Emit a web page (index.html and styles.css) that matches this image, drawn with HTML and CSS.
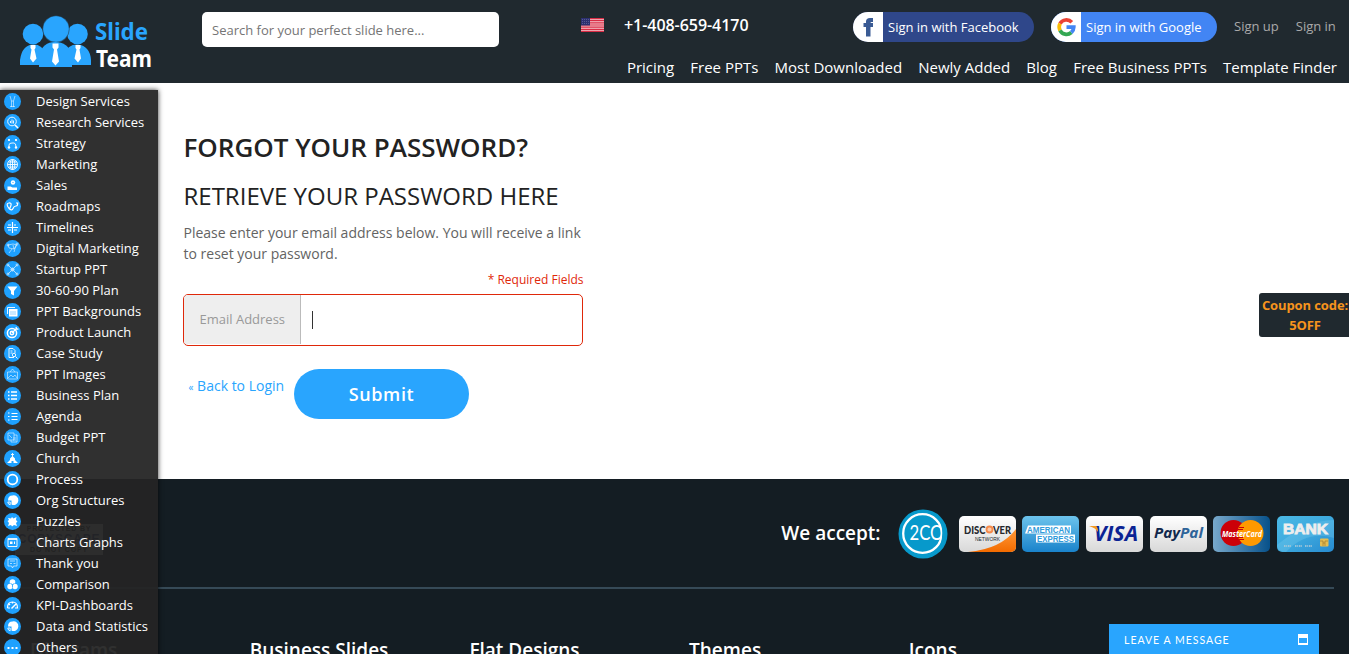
FILE: index.html
```html
<!DOCTYPE html>
<html lang="en">
<head>
<meta charset="utf-8">
<title>Forgot Your Password</title>
<link rel="stylesheet" href="styles.css">
</head>
<body>
<header class="header">
  <a class="logo" aria-label="Slide Team">
    <svg width="136" height="58" viewBox="0 0 136 58">
      <g fill="#29a5fe">
        <circle cx="15" cy="20" r="10.3"/><circle cx="59.5" cy="20" r="10.3"/>
        <path d="M2 51V46Q4 31 15 30.500Q24 30 28 40V51zM46 51V40Q50 30 60 30.500Q72 32 73 46V51z"/>
      </g>
      <circle cx="38" cy="15" r="13.300" fill="#29a5fe" stroke="#20292f" stroke-width=".5"/>
      <path d="M21 53V41Q25 28 37 28Q50 28 54 41V53z" fill="#29a5fe"/>
      <g fill="#fff"><path d="M12.500 31h5v3l-1 1.500 2 9-3.500 4-3-4 1.500-9-1-1.500zM57.500 31h5v3l-1 1.500 1.500 9-3 4-3.500-4 2-9-1-1.500zM34.500 29.500h6v4l-1.500 2 2 12-3.500 4-3.500-4 2-12-1.500-2z"/></g>
      <text class="logo-text" x="77" y="26" fill="#29a5fe" textLength="53" lengthAdjust="spacingAndGlyphs">Slide</text>
      <text class="logo-text" x="78" y="52.500" fill="#fff" textLength="56" lengthAdjust="spacingAndGlyphs">Team</text>
    </svg>
  </a>
  <input class="search" type="text" placeholder="Search for your perfect slide here...">
  <div class="header-right">
    <div class="account">
      <svg class="flag" width="23" height="14" viewBox="0 0 23 14">
        <path fill="#f5c8cf" d="M0 0h23v14H0z"/>
        <path stroke="#d92c45" stroke-width="1.200" d="M0 .6h23M0 2.700h23M0 4.900h23M0 7h23M0 9.100h23M0 11.300h23M0 13.400h23"/>
        <path fill="#2c2f70" d="M0 0h9v7.500H0z"/>
        <path stroke="#7477a5" stroke-width=".6" stroke-dasharray="1 1" d="M1 1.500h8M1 3.500h8M1 5.500h8"/>
      </svg>
      <span class="phone">+1-408-659-4170</span>
      <a class="social facebook"><span class="social-icon"><svg width="30" height="30" viewBox="0 0 30 30"><path fill="#3a5b94" d="M13 24.500v-9.500h-2.500v-4H13V9.500Q13 6 17 6h3v4H18.500q-1 0-1 1H20v4h-2.500v9.500z"/></svg></span><span class="social-label">Sign in with Facebook</span></a>
      <a class="social google"><span class="social-icon"><svg width="30" height="30" viewBox="-0.500 0 30 30"><g fill="none" stroke-width="3.700"><path stroke="#ea4335" d="M20.300 10.300A7.300 7.300 0 0 0 8.500 11.700"/><path stroke="#fbbc05" d="M8.500 11.700A7.300 7.300 0 0 0 8.500 18.300"/><path stroke="#34a853" d="M8.500 18.300A7.300 7.300 0 0 0 19.800 20.500"/><path stroke="#4285f4" d="M19.800 20.500A7.300 7.300 0 0 0 22.300 15.200H15"/></g></svg></span><span class="social-label">Sign in with Google</span></a>
      <a class="sign sign-up">Sign up</a><a class="sign sign-in">Sign in</a>
    </div>
    <nav class="nav"><a>Pricing</a><a>Free PPTs</a><a>Most Downloaded</a><a>Newly Added</a><a>Blog</a><a>Free Business PPTs</a><a>Template Finder</a></nav>
  </div>
</header>

<main class="main">
  <h1 class="title">FORGOT YOUR PASSWORD?</h1>
  <h2 class="subtitle">RETRIEVE YOUR PASSWORD HERE</h2>
  <p class="hint">Please enter your email address below. You will receive a link<br>to reset your password.</p>
  <p class="required">* Required Fields</p>
  <div class="field"><label class="field-label">Email Address</label><span class="caret"></span></div>
  <div class="actions"><a class="back"><small>«</small> Back to Login</a><button class="submit">Submit</button></div>
</main>

<footer class="footer">
  <div class="badge"><span>PROTECTED BY</span><b>COPYSCAPE</b><span>DO NOT COPY</span></div>
  <div class="payments">
    <span class="accept">We accept:</span>
    <svg class="twoco" width="50" height="50" viewBox="0 0 50 50">
      <circle cx="25" cy="25" r="24.500" fill="#0799cb"/>
      <circle cx="24.500" cy="24.500" r="19.300" fill="none" stroke="#fff" stroke-width="2.300"/>
      <text class="twoco-text" x="11.500" y="31" textLength="34" lengthAdjust="spacingAndGlyphs">2CO</text>
      <path d="M43 15q2.500 9 0 19h4V15z" fill="#0799cb"/>
    </svg>
    <svg class="card" viewBox="0 0 57 36">
      <defs>
        <linearGradient id="silver" x2="0" y2="1"><stop stop-color="#fff"/><stop offset="1" stop-color="#d8d8d8"/></linearGradient>
        <linearGradient id="amex" x2="0" y2="1"><stop stop-color="#6cc3ec"/><stop offset="1" stop-color="#1a83cb"/></linearGradient>
        <linearGradient id="master"><stop stop-color="#78a9cc"/><stop offset="1" stop-color="#07518a"/></linearGradient>
        <linearGradient id="bank" x2="1" y2="1"><stop stop-color="#4bb9e5"/><stop offset=".5" stop-color="#3da9de"/><stop offset="1" stop-color="#278bd0"/></linearGradient>
        <linearGradient id="orange" x2="0" y2="1"><stop stop-color="#ff9a3a"/><stop offset="1" stop-color="#f36b00"/></linearGradient>
        <clipPath id="round"><rect width="57" height="36" rx="5"/></clipPath>
      </defs>
      <g clip-path="url(#round)"><path fill="url(#silver)" d="M0 0h57v36H0z"/><path fill="url(#orange)" d="M57 13Q42 33 9 36h48z"/></g>
      <g fill="#24272d"><text class="lato-bold" x="5" y="17.500" font-size="11" textLength="21.500" lengthAdjust="spacingAndGlyphs">DISC</text><text class="lato-bold" x="34" y="17.500" font-size="11" textLength="18" lengthAdjust="spacingAndGlyphs">VER</text><text class="sans" x="16" y="24.500" font-size="6" textLength="25" lengthAdjust="spacingAndGlyphs">NETWORK</text></g>
      <circle cx="30.500" cy="13.500" r="3" fill="#fbc9a9" stroke="#f58a4b" stroke-width="1.800"/>
    </svg>
    <svg class="card" viewBox="0 0 57 36"><rect width="57" height="36" rx="5" fill="url(#amex)"/><path fill="#fff" d="M6 9.500h43v8H3zM14 18.500h39v8H14z"/><g fill="#319bdb"><text class="sans-bold" x="5" y="16.500" font-size="8.500" textLength="43" lengthAdjust="spacingAndGlyphs">AMERICAN</text><text class="sans-bold" x="15" y="25.500" font-size="8.500" textLength="37" lengthAdjust="spacingAndGlyphs">EXPRESS</text></g></svg>
    <svg class="card" viewBox="0 0 57 36"><rect width="57" height="36" rx="5" fill="url(#silver)"/><text class="open-bold italic" x="8" y="25" font-size="20.500" textLength="44" lengthAdjust="spacingAndGlyphs" fill="#0b2394">VISA</text><path d="M3 10h7q2 1 2 6-2-4-9-6z" fill="#f39a22"/></svg>
    <svg class="card" viewBox="0 0 57 36"><rect width="57" height="36" rx="5" fill="url(#silver)"/><g font-size="15"><text class="open-bold italic" x="4" y="22" textLength="26" lengthAdjust="spacingAndGlyphs" fill="#11284c">Pay</text><text class="open-bold italic" x="30" y="22" textLength="23" lengthAdjust="spacingAndGlyphs" fill="#2e6499">Pal</text></g></svg>
    <svg class="card" viewBox="0 0 57 36"><rect width="57" height="36" rx="5" fill="url(#master)"/><circle cx="20.500" cy="17" r="13" fill="#cc0008"/><circle cx="37.500" cy="17" r="13" fill="#ff9900"/><path stroke="#cc0008" d="M26 11.500h5M25 13.500h5M25 21.500h5M26 23.500h5"/><text class="open-bold italic master-text" x="9" y="21.300" textLength="40" lengthAdjust="spacingAndGlyphs">MasterCard</text></svg>
    <svg class="card" viewBox="0 0 57 36"><rect width="57" height="36" rx="5" fill="url(#bank)"/><path d="M0 29Q30 4 57 4V22Q30 14 9 36Q0 36 0 29z" fill="#8dd7f3" opacity=".25"/><text class="sans-bold bank-text" x="6" y="18" font-size="15.500" textLength="45" lengthAdjust="spacingAndGlyphs">BANK</text><path stroke="#b0cbd8" stroke-dasharray="1.500 .7 1 .8" stroke-width="2" d="M7 30h7M18 30h7M28 30h7" opacity=".8"/><rect x="43" y="22.500" width="8.500" height="8" rx="1" fill="#e5bd51"/><path stroke="#a57c2c" stroke-width=".7" fill="none" d="M43 25h3v5M51 25h-3v5M46 27h2"/></svg>
  </div>
  <div class="columns"><h3>Diagrams</h3><h3>Business Slides</h3><h3>Flat Designs</h3><h3>Themes</h3><h3>Icons</h3></div>
</footer>

<aside class="sidebar">
  <a><svg viewBox="0 0 17 17"><path d="M6 3l1.500 5h2L11 3M7.500 8v6M9.500 8v6M6 13.500h5" class="soft"/></svg>Design Services</a>
  <a><svg viewBox="0 0 17 17"><circle cx="8" cy="7.500" r="4.300"/><path d="M11 11l3 3" stroke-width="1.600"/><path d="M6.500 7v2M8 5.500v4M9.500 6.500v3"/></svg>Research Services</a>
  <a><svg viewBox="0 0 17 17"><path d="M4 4l2 2M6 4L4 6M11 4l2 2M13 4l-2 2M5 12.500V10q0-2 3-2h2q2 0 2 4" /><circle cx="5" cy="12.500" r="1.200" class="solid"/><circle cx="12" cy="12.500" r="1.200" class="solid"/></svg>Strategy</a>
  <a><svg viewBox="0 0 17 17"><circle cx="8.500" cy="8.500" r="5"/><ellipse cx="8.500" cy="8.500" rx="2.300" ry="5"/><path d="M3.500 8.500h10M4.500 6h8M4.500 11h8M8.500 3.500v10"/></svg>Marketing</a>
  <a><svg viewBox="0 0 17 17"><circle cx="9" cy="5.500" r="2.200" class="solid"/><path d="M8.500 5.500h1" class="blue"/><path d="M3.500 9.500h3l2 1h4.500v2.500H3.500z" class="solid"/></svg>Sales</a>
  <a><svg viewBox="0 0 17 17"><path d="M5.500 11Q1 5.500 5 5t.5 6Q8 13 9 10.500T12 8Q14 8 13.500 5M12 5h2.500" stroke-width="1.200"/></svg>Roadmaps</a>
  <a><svg viewBox="0 0 17 17"><path d="M8.500 3v11M3 8.500h11M4 6h3M10 11h3M4 11h3M10 6h2" stroke-width="1.200"/></svg>Timelines</a>
  <a><svg viewBox="0 0 17 17"><path d="M4 5l5-1 4 1-3 4-5-1zM8 9l-3 4M9 5l1 4M12 5l-2 7" class="soft"/><circle cx="4" cy="5" r="1" class="soft"/><circle cx="13" cy="4" r="1" class="soft"/></svg>Digital Marketing</a>
  <a><svg viewBox="0 0 17 17"><g class="pale"><path d="M4 4l9 9M13 4l-9 9"/><circle cx="8.500" cy="8.500" r="2" class="solid"/><circle cx="4" cy="4" r="1"/><circle cx="13" cy="4" r="1"/><circle cx="4" cy="13" r="1"/><circle cx="13" cy="13" r="1"/></g></svg>Startup PPT</a>
  <a><svg viewBox="0 0 17 17"><path d="M3.500 4.500h10L10 9v4.500l-3-1.500V9z" class="solid"/></svg>30-60-90 Plan</a>
  <a><svg viewBox="0 0 17 17"><path d="M3.500 11V4.500H11" /><path d="M5 6h8.500v7.500H5z" class="solid"/><path d="M6.500 9h6M6.500 11h6" class="blue" stroke-dasharray="1 1"/></svg>PPT Backgrounds</a>
  <a><svg viewBox="0 0 17 17"><circle cx="8" cy="9" r="4.600" stroke-width="1.500"/><circle cx="8" cy="9" r="1.700" stroke-width="1.500"/><path d="M8 9l5-5M12 3l.5 2 2 .2" stroke-width="1.300"/></svg>Product Launch</a>
  <a><svg viewBox="0 0 17 17"><path d="M11 8V5.500L9 3.500H5v9h5M6.500 6h2M6.500 8h2"/><circle cx="10" cy="10" r="1.700"/><path d="M11.500 11.500l2 2"/></svg>Case Study</a>
  <a><svg viewBox="0 0 17 17"><g class="soft"><path d="M3.500 6h10v7h-10zM6 6l2.500-3L11 6M4 12l3-3 2 2 2-2 2 3"/></g></svg>PPT Images</a>
  <a><svg viewBox="0 0 17 17"><path d="M4 5h1.500M4 8.500h1.500M4 12h1.500M7 5h6M7 8.500h6M7 12h6" stroke-width="1.500"/></svg>Business Plan</a>
  <a><svg viewBox="0 0 17 17"><path d="M4 5h1.500M4 8.500h1.500M4 12h1.500M7.500 5.500h6M7.500 8.500h6M7.500 11.500h6" stroke-width="1.200"/></svg>Agenda</a>
  <a><svg viewBox="0 0 17 17"><g class="soft"><path d="M4 4h6v7H4zM5 6l3 3M10 6h3v7H7v-2M9 9h3M9 11h3"/></g></svg>Budget PPT</a>
  <a><svg viewBox="0 0 17 17"><path d="M8.500 3v4M7 4.500h3"/><path d="M8.500 6L11 8.500V10l3 3H9.500v-2h-2v2H3l3-3V8.500z" class="solid"/></svg>Church</a>
  <a><svg viewBox="0 0 17 17"><circle cx="8.500" cy="8.500" r="4.800" stroke-width="1.800"/></svg>Process</a>
  <a><svg viewBox="0 0 17 17"><path d="M8.500 3.500a4.800 4.800 0 1 1-1 9V8.500H4q0-5 4.500-5z" class="solid"/><path d="M3.800 10h2.400v2.800Q4 12.500 3.800 10z"/></svg>Org Structures</a>
  <a><svg viewBox="0 0 17 17"><path d="M4 5l3 .5L8 4l1.500 1.500L12.500 4l-.5 3 1.500 1.500L12 10l1 3-3-1-2 1.500L7 12l-3 1 1-3-1.500-2L5 7z" class="solid"/></svg>Puzzles</a>
  <a><svg viewBox="0 0 17 17"><path d="M4 4.500h9v8H4zM4 5.500h9"/><path d="M6 7.500h2.500V10H6zM10 7.500h1V10h-1z" class="solid"/></svg>Charts Graphs</a>
  <a><svg viewBox="0 0 17 17"><g class="pale"><path d="M4 4h9v7H9.500l-1 2-1-2H4zM6 6h5M6 8.500h2M9.500 8.500h2"/></g></svg>Thank you</a>
  <a><svg viewBox="0 0 17 17"><circle cx="8.500" cy="6" r="2.800" class="solid"/><circle cx="6" cy="10.500" r="2.700" class="solid"/><circle cx="11" cy="10.500" r="2.700" class="solid"/><path d="M8.500 8.500v3M8.500 8.500l-2-1M8.500 8.500l2-1" class="blue" stroke-width=".8"/></svg>Comparison</a>
  <a><svg viewBox="0 0 17 17"><path d="M3.500 11q0-6 5-6t5 6h-2.500M6 11H3.500M5 7l1 1M8.500 5v1.500" stroke-width="1.200"/><path d="M7.500 11.500L12 7" stroke-width="1.500"/></svg>KPI-Dashboards</a>
  <a><svg viewBox="0 0 17 17"><path d="M8.500 3.500a4.800 4.800 0 1 1-1 9V8.500H4q0-5 4.500-5z" class="solid"/><path d="M3.800 10h2.400v2.800Q4 12.500 3.800 10z"/></svg>Data and Statistics</a>
  <a><svg viewBox="0 0 17 17"><path d="M3.500 8h2v2h-2zM7.500 8h2v2h-2zM11.500 8h2v2h-2z" class="solid"/></svg>Others</a>
</aside>

<div class="coupon">Coupon code:<br>5OFF</div>
<div class="chat"><span>LEAVE A MESSAGE</span><svg width="10" height="11" viewBox="0 0 10 11"><path fill="#fff" fill-rule="evenodd" d="M0 0h10v11H0zM1 4v5h8V4z"/></svg></div>
</body>
</html>
```

FILE: styles.css
```css
* { box-sizing: border-box; }
body { position: relative; margin: 0; width: 1349px; height: 654px; overflow: hidden; background: #fff; font-family: "Open Sans", sans-serif; }
h1, h2, h3, p { margin: 0; }

.header { display: flex; height: 83px; background: #20292f; color: #fff; }
.logo { width: 136px; margin: 14px 0 0 18px; flex: none; }
.logo svg, .social svg { display: block; overflow: visible; }
.logo-text { font: 700 22.5px "Noto Sans", sans-serif; }
.search { flex: none; width: 297px; height: 35px; margin: 12px 0 0 48px; padding: 0 10px; border: 0; border-radius: 5px; background: #fff; font: 13px "Open Sans", sans-serif; }
.search::placeholder { color: #757575; }
.header-right { flex: 1; padding-top: 12px; }
.account { display: flex; height: 30px; padding-left: 82px; }
.flag { flex: none; margin-top: 6px; }
.phone { width: 125px; margin: 2px 0 0 20px; font-size: 16px; font-weight: 600; line-height: 22px; letter-spacing: -.05px; white-space: nowrap; }
.social { display: flex; flex: none; height: 30px; border-radius: 15px; overflow: hidden; font-size: 13px; line-height: 30px; }
.social-icon { width: 30px; background: #fff; }
.social-label { padding-left: 5px; white-space: nowrap; }
.facebook { width: 181px; margin-left: 104px; background: #2f478a; }
.google { width: 166px; margin-left: 17px; background: #4285f4; }
.sign { margin-left: 17px; font-size: 13px; line-height: 28px; color: #aaa; white-space: nowrap; }
.nav { display: flex; justify-content: flex-end; gap: 16.15px; padding: 15px 12px 0 0; font-size: 15px; line-height: 20px; white-space: nowrap; }

.main { height: 396px; padding: 48px 0 0 183px; }
.title { padding-left: .5px; font-size: 26px; font-weight: 600; line-height: 33px; color: #222; }
.subtitle { margin-top: 16px; padding-left: .5px; font-size: 24px; font-weight: 400; line-height: 32px; color: #222; }
.hint { margin-top: 10px; padding-left: .5px; font-size: 14px; line-height: 21px; color: #636363; }
.required { width: 400.5px; margin-top: 7px; text-align: right; font-size: 12px; line-height: 18px; color: #df280a; }
.field { display: flex; align-items: center; width: 400px; height: 52px; margin-top: 5px; border: 1px solid #df280a; border-radius: 5px; overflow: hidden; }
.field-label { align-self: flex-start; width: 117px; height: 49px; padding-left: 15.5px; border-right: 1px solid #bbb; background: #eee; font-size: 13px; line-height: 49px; color: #999; }
.caret { width: 1px; height: 18px; margin-left: 11px; background: #333; }
.actions { display: flex; margin-top: 23px; }
.back { width: 111px; padding-left: 5.5px; font-size: 14px; line-height: 33px; color: #29a5fe; white-space: nowrap; }
.back small { font-size: 10px; }
.submit { width: 175px; height: 50px; padding: 0; border: 0; border-radius: 25px; background: #29a5fe; color: #fff; font: 600 18px "Open Sans", sans-serif; letter-spacing: .6px; }

.footer { position: relative; height: 175px; background: #141d23; color: #fff; overflow: hidden; }
.badge { position: absolute; left: 15px; top: 45px; display: flex; flex-direction: column; align-items: center; width: 88px; height: 31px; background: #c8c8c8; color: #000; font: 700 7px/10px "Liberation Sans", sans-serif; letter-spacing: .8px; white-space: nowrap; }
.badge b { font-size: 12px; line-height: 11px; color: #111a66; }
.payments { display: flex; align-items: center; justify-content: flex-end; height: 110px; padding-top: 1px; margin-right: 15px; border-bottom: 2px solid #364a57; }
.accept { margin-right: 17px; padding-bottom: 1px; font-size: 19px; font-weight: 600; white-space: nowrap; }
.twoco { flex: none; margin-right: 11px; }
.twoco-text { font: 22px Lato, sans-serif; fill: #fff; }
.card { flex: none; width: 57px; height: 36px; margin-right: 6.7px; }
.card:last-child { margin-right: 0; }
.sans { font-family: "Liberation Sans", sans-serif; }
.sans-bold { font-family: "Liberation Sans", sans-serif; font-weight: 700; }
.lato-bold { font-family: Lato, sans-serif; font-weight: 900; }
.open-bold { font-family: "Open Sans", sans-serif; font-weight: 700; }
.italic { font-style: italic; }
.master-text { font-size: 9px; fill: #fff; }
.bank-text { fill: #eee; stroke: #eee; stroke-width: .9px; }
.columns { display: grid; grid-template-columns: repeat(5, 219.700px); padding: 48px 0 0 30px; }
.columns h3 { font-size: 19px; font-weight: 600; line-height: 26px; white-space: nowrap; }

.sidebar { position: absolute; left: 0; top: 90px; width: 158px; height: 570px; padding-top: 1px; background: rgba(36, 36, 36, .945); box-shadow: 0 0 5px rgba(0, 0, 0, .8); color: #fff; }
.sidebar a { display: flex; align-items: center; gap: 15px; height: 21px; padding-left: 4px; font-size: 13px; line-height: 21px; white-space: nowrap; }
.sidebar svg { flex: none; width: 17px; height: 17px; border-radius: 50%; background: #1ea1ff; fill: none; stroke: #fff; stroke-width: .9; }
.sidebar .solid { fill: #fff; stroke: none; }
.sidebar .soft { opacity: .6; }
.sidebar .pale { opacity: .7; }
.sidebar .blue { stroke: #1ea1ff; }

.coupon { position: absolute; right: 0; top: 293px; width: 90px; height: 44px; padding: 2px 0 0 2px; border-radius: 3px 0 0 3px; background: #20292f; color: #f7941d; text-align: center; font-size: 13px; font-weight: 700; line-height: 20px; letter-spacing: -.1px; white-space: nowrap; }
.chat { position: absolute; left: 1109px; top: 624px; display: flex; justify-content: space-between; width: 210px; height: 30px; padding: 10px 11px 0 15px; background: #29a5fe; color: #fff; font: 10.5px/12px Lato, sans-serif; letter-spacing: 1px; }
```
